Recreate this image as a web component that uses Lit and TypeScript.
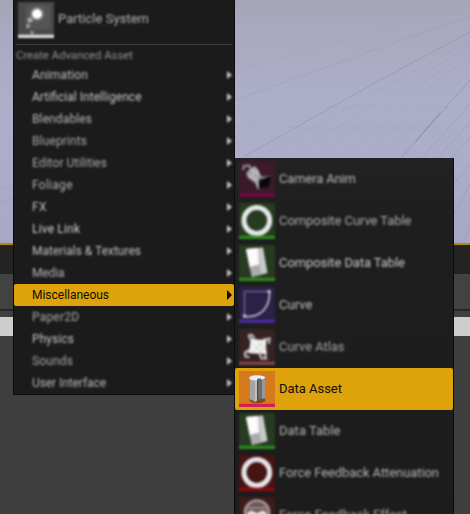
import { LitElement, html, svg, css, nothing } from 'lit';
import { customElement, property } from 'lit/decorators.js';

const CATEGORIES: [string, number, number, string][] = [
  // label, text width, softness, colour
  ['Animation', 56, 0.8, '#c0c0c0'], ['Artificial Intelligence', 109.5, 0.8, '#c8c8c8'],
  ['Blendables', 60, 0.9, '#b8b8b8'], ['Blueprints', 55, 1, '#a8a8a8'],
  ['Editor Utilities', 75, 1, '#aaaaaa'], ['Foliage', 40.5, 0.9, '#b0b0b0'], ['FX', 14.5, 0.8, '#c0c0c0'],
  ['Live Link', 48, 0.8, '#d0d0d0'], ['Materials & Textures', 109, 0.8, '#c0c0c0'],
  ['Media', 32.5, 0.8, '#b4b4b4'], ['Miscellaneous', 77, 0, '#110d03'], ['Paper2D', 47, 1, '#a8a8a8'],
  ['Physics', 42, 0.8, '#c4c4c4'], ['Sounds', 41, 1, '#a8a8a8'], ['User Interface', 74, 0.9, '#b8b8b8'],
];

const ASSETS: [string, string, string, string, number, number, string][] = [
  // label, icon, tile colour, stripe colour, softness, text width, text colour
  ['Camera Anim', 'camera', '#3c1a2b', '#7a0643', 0.8, 77, '#b8b8b8'],
  ['Composite Curve Table', 'ring', '#263b20', '#2e8a1b', 1, 132.5, '#acacac'],
  ['Composite Data Table', 'table', '#263b20', '#2e8a1b', 0.8, 126, '#c8c8c8'],
  ['Curve', 'curve', '#2a2148', '#4b2aa5', 0.8, 33.5, '#c0c0c0'],
  ['Curve Atlas', 'atlas', '#352323', '#8a4343', 1, 65.5, '#a4a4a4'],
  ['Data Asset', 'data', '#d47a1c', '#d41e58', 0, 63, '#110d03'],
  ['Data Table', 'table', '#263b20', '#2e8a1b', 0.8, 61.5, '#b4b4b4'],
  ['Force Feedback Attenuation', 'ring', '#451413', '#8f0a0c', 0.9, 160, '#b4b4b4'],
  ['Force Feedback Effect', 'pad', '#3f1a1a', '#8f0a0c', 1, 128, '#a4a4a4'],
];

@customElement('asset-icon')
export class AssetIcon extends LitElement {
  @property() kind = '';
  @property() tile = '#4a4a4a';
  @property() stripe = '#e2e2e2';
  @property({ type: Number }) soft = 0;

  static styles = css`
    :host { display: block; width: 36px; height: 36px; flex: none; }
    svg { display: block; width: 36px; height: 36px; overflow: visible; }
  `;

  glyph() {
    switch (this.kind) {
      case 'particle': return svg`
        <rect x="8" y="3" width="24" height="24" fill="#555"/>
        <circle cx="19" cy="12" r="7.5" fill="#909090" opacity=".4"/>
        <circle cx="19" cy="12" r="5" fill="#fff"/>
        <circle cx="12" cy="18" r="2.6" fill="#aaa"/><circle cx="10" cy="24" r="1.9" fill="#aaa"/>
        <circle cx="14" cy="30.5" r="1.8" fill="#999"/>`;
      case 'camera': return svg`
        <path d="M4 9 L5 5 L10 4.5 L12 8" fill="none" stroke="#868686" stroke-width="2.4"/>
        <path d="M7 12 L12 7 L16 5 L20 10 L22 15 L28 16 L22 24 L19 29 L16 22 L9 17Z" fill="#a0a0a0"/>
        <path d="M13 8 L15 14 M17 8 L19 15 M10 14 L18 19" stroke="#d4d4d4" stroke-width="1.4"/>
        <path d="M20 19 L32.5 15 L29.5 26 L20 27Z" fill="#080808"/>
        <path d="M20 18 L25 16 L32 15" fill="none" stroke="#666" stroke-width="1"/>`;
      case 'ring': return svg`<circle cx="17.8" cy="17.5" r="12.9" fill="none" stroke="#e4e4e8" stroke-width="5"/>`;
      case 'table': return svg`
        <path d="M7 4 L24 2.5 L28.5 28 L13 32Z" fill="#cacaca"/>
        <path d="M7 4 L18.5 3 L20 20 L10.5 22Z" fill="#fcfcfc"/>
        <path d="M10.5 22 L20 19.5 L22 29.5 L13 32Z" fill="#acacac"/>
        <path d="M20.5 14 L22 29.5" stroke="#b4b4b4" stroke-width="1"/>`;
      case 'curve': return svg`
        <path d="M5.5 29 V4.5 H30" fill="none" stroke="#7d7791" stroke-width="1.1"/>
        <path d="M5.5 29.5 C21 31 31 21 30.5 5" fill="none" stroke="#b8b4c4" stroke-width="1.8"/>
        <circle cx="5.5" cy="29" r="1.8" fill="#cac6d4"/><circle cx="30" cy="4.5" r="1.8" fill="#cac6d4"/>`;
      case 'atlas': return svg`
        <path d="M11 9 Q19 12 28 10 Q26 17 28 25 Q19 25 9 24 Q12 17 11 9Z" fill="#f4f4f4"/>
        <path d="M13 14 L23 24 M18 12 L26 20 M24 13 L13 23 M26 18 L20 24" stroke="#bbb" stroke-width=".8"/>
        <g fill="none" stroke="#c4c0c0" stroke-width="2.2" stroke-linecap="round">
          <path d="M11 10 L10 6.5 L13 6 L15 9"/>
          <path d="M25 10.5 L30.5 9.5 L30 14"/>
          <path d="M10 21 L6 23.5 L6.5 27.5 L9.5 28"/>
          <path d="M21 26 L22.5 29.5 L27 29.5 L26 25"/></g>`;
      case 'data': return svg`
        <ellipse cx="18.5" cy="29" rx="8" ry="3.2" fill="#6a3c10" opacity=".8"/>
        <path d="M10.5 7 L26 7 L26 27 L20.5 28.5 L16.5 31 L10.5 28Z" fill="#6a6a6a"/>
        <path d="M10.5 8 L15.5 10 V30.5 L10.5 28Z" fill="#a4a4a4"/>
        <path d="M15.5 10 L18 9.5 V29.5 L16 31 L15.5 30.5Z" fill="#c0c0c0"/>
        <path d="M18 9 L19.5 8 V28 L18 29.5Z" fill="#484848"/>
        <path d="M19.5 9 L21.5 10 V26.5 L19.5 28Z" fill="#707070"/>
        <path d="M23 9.5 L26 8 V27 L23 28Z" fill="#989898"/>
        <path d="M10 7 Q11 4.4 18 4.2 Q25.5 4.2 26.3 6.8 Q25 8.6 22.5 8.8 L22 7.4 L18.5 7.6 L18 9.8 Q11 9.8 10 7Z" fill="#efefef"/>`;
      default: return svg`
        <circle cx="18" cy="15.5" r="12" fill="#6d5558" stroke="#a39a9b" stroke-width="2.6"/>
        <path d="M9 11 H27" stroke="#948888" stroke-width="2"/>
        <path d="M8 19 Q8 13 14 14 L18 16 L22 14 Q28 13 28 19 V25 H8Z" fill="#ddd"/>`;
    }
  }

  render() {
    const blur = this.soft ? `filter:blur(${this.soft}px)` : nothing;
    return html`<svg viewBox="0 0 36 36">
      <g style=${blur}>
        <rect width="36" height="36" fill=${this.tile}></rect>
        ${this.glyph()}
        <rect y="32.8" width="36" height="3.2" fill=${this.stripe}></rect>
      </g>
    </svg>`;
  }
}

@customElement('app-root')
export class AppRoot extends LitElement {
  static styles = css`
    :host { display: block; position: relative; width: 470px; height: 514px; overflow: hidden;
      font-family: Roboto, "Liberation Sans", sans-serif; color: #b0b0b0; }
    .scene { display: flex; flex-direction: column; height: 514px; background: #3e3e3e; }
    .viewport { height: 243px; background: linear-gradient(#a6a5b7 0, #a8a8c0 28px, #adaec8 100px, #acadc8 160px, #a7a8c3 100%); }
    .viewport svg { display: block; }
    .edge { height: 2px; background: #b98508; }
    .tabs { height: 29px; background: #232323; }
    .tools { height: 35px; background: #424242; }
    .rule { height: 2px; background: #272727; }
    .gap { height: 6px; background: #404040; }
    .field { height: 19px; background: #cdcdcd; }
    .menu { position: absolute; box-sizing: border-box; background: #1b1b1b; }
    .main { left: 13px; top: 0; width: 222px; height: 395px; border: 1px solid #0b0b0d; border-top: 0; }
    .sub { left: 234px; top: 158px; width: 220px; height: 380px; border: 1px solid #0b0b0d; border-top: 0;
      background: linear-gradient(#222 0, #1e1e1e 60px, #1c1c1c); }
    .particle { display: flex; align-items: center; height: 44px; box-sizing: border-box; padding: 0 0 4px 4px; gap: 4px; }
    .particle .text { margin-bottom: 2px; }
    .divider { height: 1px; margin: 0 2px; background: #3b3b3b; box-shadow: 0 0 1px #333; }
    .heading { display: flex; align-items: center; height: 19px; padding-left: 2px; color: #909090; }
    .row { display: flex; align-items: center; justify-content: space-between; height: 22px; padding: 0 2px 0 18px; }
    .arrow { display: block; width: 5px; height: 8px; fill: #c4c4c4; }
    .picked { background: #dea20b; border-radius: 2px; }
    .picked .arrow { fill: #110d03; height: 10px; }
    .asset { display: flex; align-items: center; height: 42px; padding-left: 4px; gap: 4px; }
    .text { display: block; overflow: visible; flex: none; }
  `;

  fitted(text: string, size: number, width: number, soft: number, color = 'currentColor') {
    const blur = soft ? `filter:blur(${soft}px)` : nothing;
    return html`<svg class="text" width=${width + 4} height="20" style=${blur}>
      <text x="0" y=${size > 12 ? 13.6 : 14} font-size=${size} textLength=${width} fill=${color}>${text}</text>
    </svg>`;
  }

  render() {
    return html`
      <div class="scene">
        <div class="viewport">
          <svg width="470" height="243" fill="none" stroke="#777991">
            <path d="M245 156 L380 80 L470 32" opacity=".3"/>
            <path d="M235 100 L360 55 L470 16" opacity=".14"/>
            <path d="M235 70 L400 25" opacity=".06"/>
            <path d="M402 157 L470 80" opacity=".35"/>
            <path d="M416 141 L440 113" stroke="#60627a" opacity=".35"/>
            <path d="M260 158 L470 40 M288 158 L470 45 M315 158 L470 50 M340 158 L470 55 M362 158 L470 62 M382 158 L470 70" opacity=".08"/>
            <path d="M422 158 L470 104 M438 158 L470 122 M452 158 L470 138" opacity=".18"/>
            <path d="M454 184 L470 163 M454 214 L470 184 M463 243 L470 226" opacity=".18"/>
            <path d="M235 107 H470 M235 127 H470 M300 130 H470 M454 202 H470" opacity=".06"/>
            <path d="M0 190 L13 186 M0 203 L13 198" opacity=".12"/>
          </svg>
        </div>
        <div class="edge"></div><div class="tabs"></div><div class="tools"></div>
        <div class="rule"></div><div class="gap"></div><div class="field"></div>
      </div>
      <div class="menu main">
        <div class="particle">
          <asset-icon kind="particle" soft="0.8"></asset-icon>
          ${this.fitted('Particle System', 13, 91, 0.8, '#b4b4b4')}
        </div>
        <div class="divider"></div>
        <div class="heading">${this.fitted('Create Advanced Asset', 11.5, 117, 0.8)}</div>
        ${CATEGORIES.map(([label, width, soft, color]) => html`
          <div class="row ${soft ? '' : 'picked'}">
            ${this.fitted(label, 12, width, soft, color)}
            <svg class="arrow" viewBox="0 0 5 10" preserveAspectRatio="none" style=${soft ? 'filter:blur(.8px)' : nothing}>
              <path d="M0 0 L5 5 L0 10Z"/>
            </svg>
          </div>`)}
      </div>
      <div class="menu sub">
        ${ASSETS.map(([label, kind, tile, stripe, soft, width, color]) => html`
          <div class="asset ${soft ? '' : 'picked'}">
            <asset-icon kind=${kind} tile=${tile} stripe=${stripe} soft=${soft}></asset-icon>
            ${this.fitted(label, 13, width, soft, color)}
          </div>`)}
      </div>`;
  }
}
